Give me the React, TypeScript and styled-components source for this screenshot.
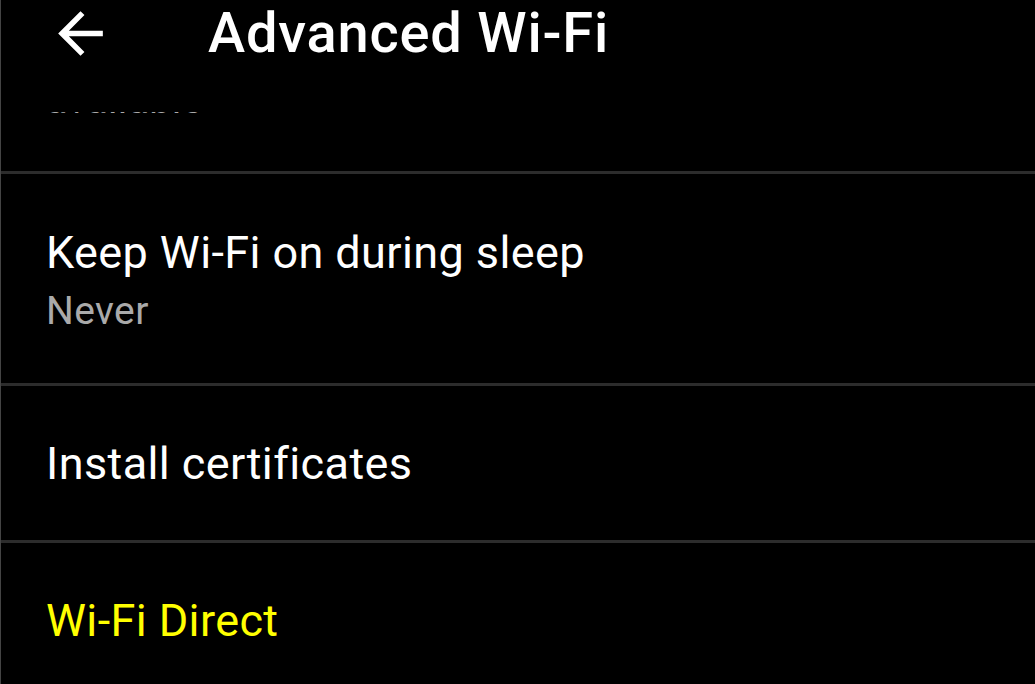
import React from 'react';
import styled, {createGlobalStyle} from 'styled-components';

const GlobalStyle = createGlobalStyle`
  html, body {
    margin: 0;
    padding: 0;
    background: #000;
  }
  body {
    font-family: Roboto, "Liberation Sans", sans-serif;
    -webkit-font-smoothing: antialiased;
  }
`;

const Screen = styled.div`
  width: 1035px;
  height: 684px;
  box-sizing: border-box;
  background: #000;
  border-left: 1px solid #444;
  display: flex;
  flex-direction: column;
  overflow: hidden;
`;

const AppBar = styled.header`
  flex: 0 0 112px;
  background: #000;
`;

const Toolbar = styled.div`
  height: 66px;
  display: flex;
  align-items: center;
  padding-left: 46px;
`;

const BackButton = styled.button`
  width: 67px;
  height: 67px;
  padding: 0;
  border: none;
  background: none;
  color: #fff;
  display: flex;
  align-items: center;
  justify-content: center;
  cursor: pointer;

  svg {
    display: block;
  }
`;

const Title = styled.h1`
  margin: 0 0 0 94px;
  font-size: 56px;
  line-height: 66px;
  font-weight: 500;
  letter-spacing: 0.8px;
  color: #fff;
  white-space: nowrap;
`;

// viewport of the settings list; content is scrolled so the first row is mostly hidden
const ScrollArea = styled.div`
  flex: 1;
  overflow: hidden;
`;

const ScrollContent = styled.div<{$offset: number}>`
  margin-top: ${p => -p.$offset}px;
`;

const PrefRow = styled.div<{$hasSummary?: boolean; $bottom?: number}>`
  box-sizing: border-box;
  min-height: ${p => (p.$hasSummary ? 0 : 154)}px;
  padding: ${p => (p.$hasSummary ? `52px 45px ${p.$bottom ?? 49}px` : '51px 45px 50px')};
  border-bottom: 3px solid #2c2c2c;
  display: flex;
  flex-direction: column;
  justify-content: center;
`;

const PrefTitle = styled.div<{$accent?: boolean}>`
  font-size: 45px;
  line-height: 53px;
  font-weight: 400;
  letter-spacing: 0.4px;
  color: ${p => (p.$accent ? '#ffff00' : '#fff')};
  white-space: nowrap;
`;

const PrefSummary = styled.div`
  margin-top: 9px;
  font-size: 39px;
  line-height: 46px;
  letter-spacing: 0.4px;
  color: #aaa;
`;

const ArrowBack = () => (
  <svg width="67" height="67" viewBox="0 0 24 24" fill="currentColor">
    <path d="M20 11H7.83l5.59-5.59L12 4l-8 8 8 8 1.41-1.41L7.83 13H20v-2z" />
  </svg>
);

interface Pref {
  title: string;
  summary?: string[];
  accent?: boolean;
  bottom?: number;
}

const prefs: Pref[] = [
  {
    title: 'Open network notification',
    summary: ['Notify when a high‑quality public network is', 'available'],
    bottom: 48
  },
  {title: 'Keep Wi‑Fi on during sleep', summary: ['Never']},
  {title: 'Install certificates'},
  {title: 'Wi‑Fi Direct', accent: true}
];

const App: React.FC = () => {
  return (
    <>
      <GlobalStyle />
      <Screen>
        <AppBar>
          <Toolbar>
            <BackButton aria-label="Back">
              <ArrowBack />
            </BackButton>
            <Title>Advanced Wi-Fi</Title>
          </Toolbar>
        </AppBar>
        <ScrollArea>
          <ScrollContent $offset={195}>
            {prefs.map(p => (
              <PrefRow key={p.title} $hasSummary={!!p.summary} $bottom={p.bottom}>
                <PrefTitle $accent={p.accent}>{p.title}</PrefTitle>
                {p.summary && (
                  <PrefSummary>
                    {p.summary.map((line, i) => (
                      <div key={i}>{line}</div>
                    ))}
                  </PrefSummary>
                )}
              </PrefRow>
            ))}
          </ScrollContent>
        </ScrollArea>
      </Screen>
    </>
  );
};

export default App;
